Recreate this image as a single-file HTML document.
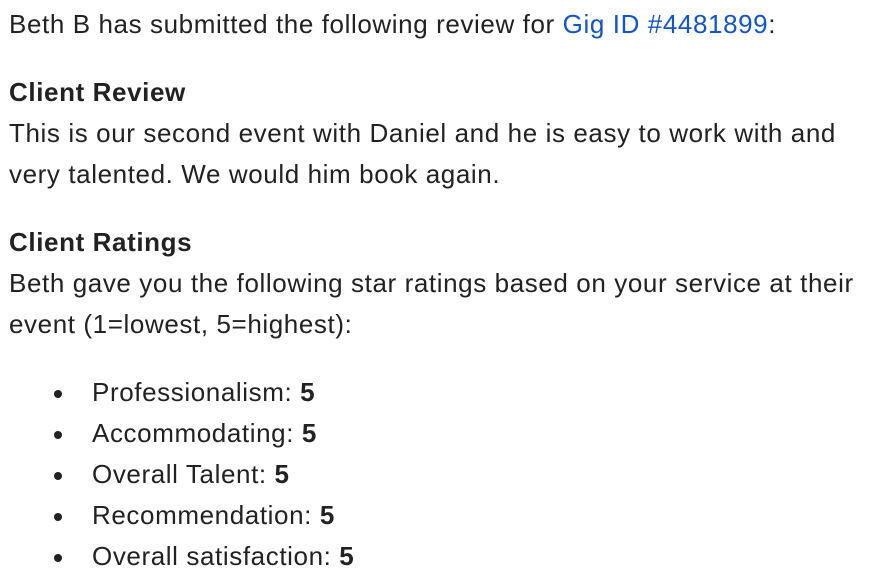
<!DOCTYPE html>
<html><head><meta charset="utf-8"><style>
html,body{margin:0;padding:0;background:#fff;width:871px;height:572px;overflow:hidden}
body{font-family:"Liberation Sans",Arial,sans-serif;font-size:26px;letter-spacing:0.6px;line-height:41px;color:#222;padding:4px 0 0 9px}
p{margin:0 0 27px 0}
a{color:#1155cc;text-decoration:none}
ul{margin:0;padding-left:83px;list-style:none}
li{margin:0;position:relative}
li:before{content:"";position:absolute;left:-38px;top:18px;width:8px;height:8px;border-radius:50%;background:#222}
</style></head><body>
<p>Beth B has submitted the following review for <a>Gig ID #4481899</a>:</p>
<p><b>Client Review</b><br>This is our second event with Daniel and he is easy to work with and<br>very talented. We would him book again.</p>
<p><b>Client Ratings</b><br>Beth gave you the following star ratings based on your service at their<br>event (1=lowest, 5=highest):</p>
<ul>
<li>Professionalism: <b>5</b></li>
<li>Accommodating: <b>5</b></li>
<li>Overall Talent: <b>5</b></li>
<li>Recommendation: <b>5</b></li>
<li>Overall satisfaction: <b>5</b></li>
</ul>
</body></html>
